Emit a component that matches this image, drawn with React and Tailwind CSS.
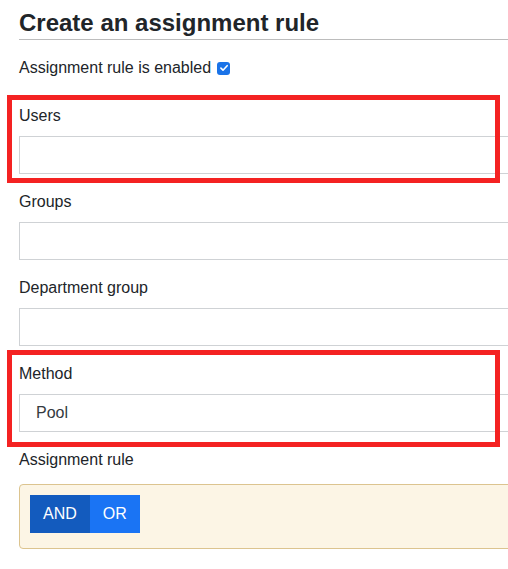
import { useState } from 'react'

function Field({ label, children }) {
  return (
    <div className="mb-4">
      <label className="block text-[16px] leading-6 mb-2">{label}</label>
      {children}
    </div>
  )
}

export default function App() {
  const [enabled, setEnabled] = useState(true)
  const [op, setOp] = useState('AND')

  return (
    <div
      className="relative w-[508px] h-[569px] overflow-hidden bg-white text-[#212529]"
      style={{ fontFamily: '"Liberation Sans", Arial, sans-serif' }}
    >
      <div className="w-[560px] pl-[19px]">
        {/* Encabezado */}
        <h1 className="pt-[10px] pb-[3px] text-[24px] leading-[26px] font-bold border-b border-[#bcbcbc] w-[489px]">
          Create an assignment rule
        </h1>

        <div className="mt-4 mb-6 flex items-center h-6 text-[16px]">
          <span>Assignment rule is enabled</span>
          <button
            onClick={() => setEnabled(!enabled)}
            className={`ml-[6px] w-[13px] h-[13px] rounded-[3px] flex items-center justify-center ${
              enabled ? 'bg-[#1a73e8]' : 'bg-white border border-gray-400'
            }`}
          >
            {enabled && (
              <svg viewBox="0 0 12 12" className="w-[10px] h-[10px]">
                <path d="M2.3 6.2 L4.8 8.6 L9.8 3.2" fill="none" stroke="white" strokeWidth="1.9" strokeLinecap="round" strokeLinejoin="round" />
              </svg>
            )}
          </button>
        </div>

        <Field label="Users">
          <input className="block w-full h-[38px] border border-[#cfd2d5] outline-none px-4" />
        </Field>
        <Field label="Groups">
          <input className="block w-full h-[38px] border border-[#cfd2d5] outline-none px-4" />
        </Field>
        <Field label="Department group">
          <input className="block w-full h-[38px] border border-[#cfd2d5] outline-none px-4" />
        </Field>
        <Field label="Method">
          <div className="flex items-center w-full h-[38px] border border-[#cfd2d5] pl-4 text-[16px] text-[#343a40]">
            Pool
          </div>
        </Field>

        <label className="block text-[16px] leading-6 mb-3">Assignment rule</label>
        <div className="h-[65px] rounded-[4px] border border-[#dcc48f] bg-[#fcf5e5] pt-[10px] pl-[10px]">
          <div className="flex">
            {['AND', 'OR'].map((o) => (
              <button
                key={o}
                onClick={() => setOp(o)}
                className={`h-[38px] px-[13px] text-white text-[16px] ${
                  op === o ? 'bg-[#135bbe]' : 'bg-[#1a74f4]'
                }`}
              >
                {o}
              </button>
            ))}
          </div>
        </div>
      </div>

      {/* Marcas rojas */}
      <div className="absolute left-[7px] top-[95px] w-[493px] h-[88px] border-[5px] border-[#f42222] pointer-events-none" />
      <div className="absolute left-[7px] top-[350px] w-[493px] h-[97px] border-[5px] border-[#f42222] pointer-events-none" />
    </div>
  )
}
